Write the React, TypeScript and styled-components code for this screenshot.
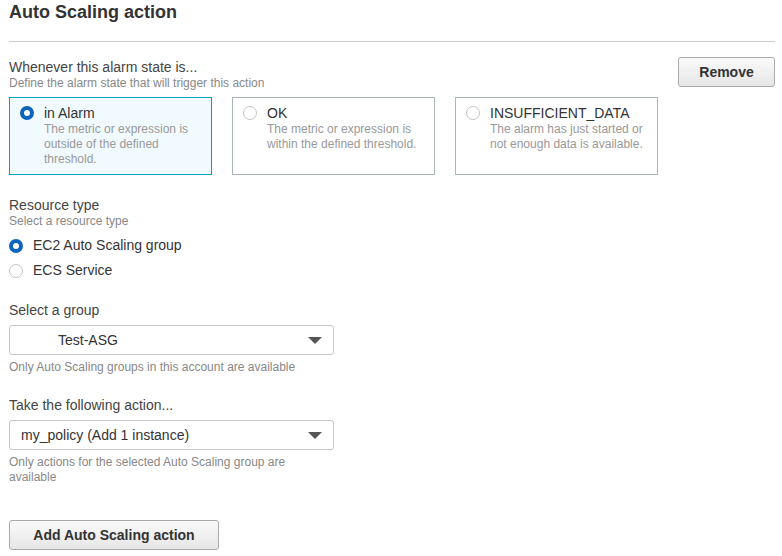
import React from "react";
import styled, { createGlobalStyle } from "styled-components";

const Global = createGlobalStyle`
  html, body { margin: 0; padding: 0; background: #fff; }
  body { font-family: "Liberation Sans", Arial, sans-serif; color: #444; }
`;

const Page = styled.div`
  padding: 0 7px 0 9px;
  width: 766px;
`;

const Title = styled.h2`
  margin: 0;
  padding-top: 1px;
  font-size: 18px;
  line-height: 22px;
  font-weight: bold;
  color: #333;
`;

const Divider = styled.hr`
  border: 0;
  border-top: 1px solid #ccc;
  margin: 18px 0 0 0;
  height: 0;
`;

const TopRow = styled.div`
  display: flex;
  justify-content: space-between;
  align-items: flex-start;
  margin-top: 15px;
`;

const Label = styled.div`
  font-size: 14px;
  line-height: 17px;
  color: #444;
`;

const Hint = styled.div`
  font-size: 12px;
  line-height: 15px;
  color: #888;
  max-width: 325px;
`;

const Button = styled.button<{ $w: number }>`
  width: ${(p) => p.$w}px;
  height: 30px;
  border: 1px solid #aaa;
  border-radius: 3px;
  background: linear-gradient(#fafafa, #e6e6e6);
  font-family: "Liberation Sans", Arial, sans-serif;
  font-weight: bold;
  font-size: 14px;
  color: #333;
  padding: 0;
  cursor: pointer;
`;

const Cards = styled.div`
  display: flex;
  gap: 20px;
  margin-top: 6px;
`;

const Card = styled.div<{ $active?: boolean }>`
  box-sizing: border-box;
  width: 203px;
  height: 78px;
  border: 1px solid ${(p) => (p.$active ? "#00a1c9" : "#aab7b8")};
  background: ${(p) => (p.$active ? "#f1faff" : "#fff")};
  padding: 7px 10px;
  display: flex;
  gap: 10px;
  align-items: flex-start;
`;

const Radio = styled.span<{ $on?: boolean }>`
  box-sizing: border-box;
  flex: none;
  width: 14px;
  height: 14px;
  border-radius: 50%;
  margin-top: 1px;
  border: ${(p) => (p.$on ? "4px solid #0b65b8" : "1px solid #c4c4c4")};
  background: #fff;
`;

const CardText = styled.div`
  display: flex;
  flex-direction: column;
`;

const CardTitle = styled.div`
  font-size: 14px;
  line-height: 16px;
  color: #333;
  margin-bottom: 1px;
`;

const CardDesc = styled.div`
  font-size: 12px;
  line-height: 15px;
  color: #999;
`;

const Section = styled.div<{ $mt: number }>`
  margin-top: ${(p) => p.$mt}px;
`;

const OptionList = styled.div`
  display: flex;
  flex-direction: column;
  gap: 8px;
  margin-top: 8px;
`;

const Option = styled.label`
  display: flex;
  align-items: center;
  gap: 10px;
  font-size: 14px;
  line-height: 17px;
  color: #333;
  & > span { margin-top: 0; }
`;

const Select = styled.div<{ $indent: number }>`
  box-sizing: border-box;
  width: 325px;
  height: 30px;
  margin: 6px 0 5px;
  border: 1px solid #c6c6c6;
  border-radius: 3px;
  display: flex;
  align-items: center;
  justify-content: space-between;
  padding: 0 11px 0 ${(p) => p.$indent}px;
  font-size: 14px;
  color: #333;
  background: #fff;
`;

const Caret = styled.span`
  width: 0;
  height: 0;
  border-left: 7px solid transparent;
  border-right: 7px solid transparent;
  border-top: 7px solid #555;
`;

export default function App() {
  return (
    <Page>
      <Global />
      <Title>Auto Scaling action</Title>
      <Divider />
      <TopRow>
        <div>
          <Label style={{ marginTop: 2 }}>Whenever this alarm state is...</Label>
          <Hint>Define the alarm state that will trigger this action</Hint>
        </div>
        <Button $w={97}>Remove</Button>
      </TopRow>
      <Cards>
        <Card $active>
          <Radio $on />
          <CardText>
            <CardTitle>in Alarm</CardTitle>
            <CardDesc>The metric or expression is outside of the defined threshold.</CardDesc>
          </CardText>
        </Card>
        <Card>
          <Radio />
          <CardText>
            <CardTitle>OK</CardTitle>
            <CardDesc>The metric or expression is within the defined threshold.</CardDesc>
          </CardText>
        </Card>
        <Card>
          <Radio />
          <CardText>
            <CardTitle>INSUFFICIENT_DATA</CardTitle>
            <CardDesc>The alarm has just started or not enough data is available.</CardDesc>
          </CardText>
        </Card>
      </Cards>

      <Section $mt={22}>
        <Label>Resource type</Label>
        <Hint>Select a resource type</Hint>
        <OptionList>
          <Option>
            <Radio $on />
            EC2 Auto Scaling group
          </Option>
          <Option>
            <Radio />
            ECS Service
          </Option>
        </OptionList>
      </Section>

      <Section $mt={23}>
        <Label>Select a group</Label>
        <Select $indent={48}>
          <span>Test-ASG</span>
          <Caret />
        </Select>
        <Hint>Only Auto Scaling groups in this account are available</Hint>
      </Section>

      <Section $mt={22}>
        <Label>Take the following action...</Label>
        <Select $indent={11}>
          <span>my_policy (Add 1 instance)</span>
          <Caret />
        </Select>
        <Hint>Only actions for the selected Auto Scaling group are available</Hint>
      </Section>

      <Section $mt={35}>
        <Button $w={210}>Add Auto Scaling action</Button>
      </Section>
    </Page>
  );
}
